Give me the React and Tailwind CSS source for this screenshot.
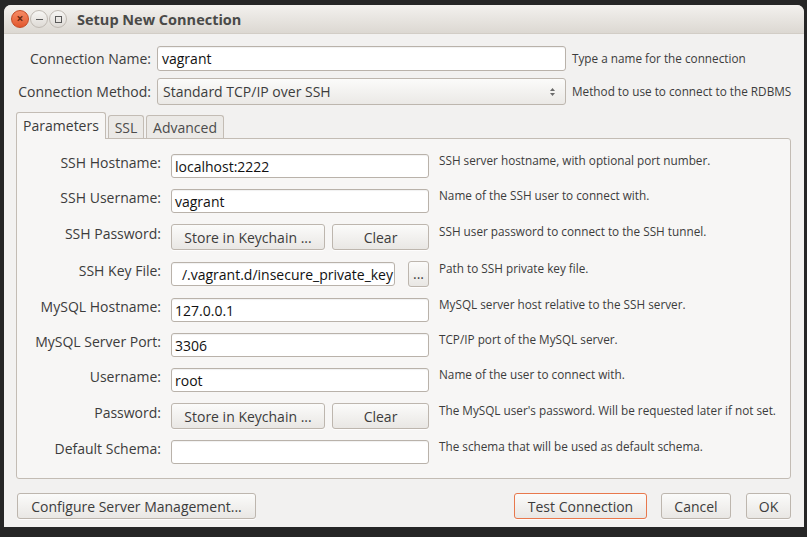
import React from "react";

const font = { fontFamily: '"Open Sans", "Noto Sans", sans-serif' };

function Input({ children, className = "" }) {
  return (
    <div className={"h-[24px] bg-white border border-[#b9b2aa] rounded-[3px] flex items-center px-[3px] text-[14px] text-[#111] whitespace-nowrap overflow-hidden shadow-[inset_0_1px_1px_rgba(0,0,0,0.06)] " + className}>
      {children}
    </div>
  );
}

function Btn({ children, className = "" }) {
  return (
    <div className={"h-[26px] flex items-center justify-center border border-[#bdb6ae] rounded-[3px] bg-gradient-to-b from-[#fbfbfa] to-[#e9e7e4] text-[14px] text-[#3c3c3c] whitespace-nowrap shadow-[0_1px_0_rgba(255,255,255,0.8)] " + className}>
      {children}
    </div>
  );
}

function Row({ label, hint, children, h = "h-[24px]" }) {
  return (
    <div className={"flex items-center " + h}>
      <div className="w-[144px] text-right text-[14px] text-[#3c3c3c] whitespace-nowrap leading-none -mt-[6px]">{label}</div>
      <div className="ml-[10px] w-[258px] flex items-center">{children}</div>
      <div className="ml-[10px] text-[11.75px] text-[#3c3c3c] whitespace-nowrap leading-none -mt-[11px]">{hint}</div>
    </div>
  );
}

export default function App() {
  return (
    <div style={font} className="w-[807px] h-[537px] bg-[#262626] pt-[5px] pl-[4px] overflow-hidden">
      <div className="w-[800px] h-[522px] rounded-t-[7px] overflow-hidden flex flex-col bg-[#f2f1f0]">
        {/* Title bar */}
        <div className="h-[29px] flex items-center bg-gradient-to-b from-[#f3f1ee] to-[#dcd8d2] border-b border-[#d2cdc6] shrink-0">
          <div className="ml-[7px] w-[18px] h-[18px] rounded-full bg-gradient-to-b from-[#f58a64] to-[#e2572d] border border-[#c44a25] flex items-center justify-center">
            <span className="text-[12px] leading-none text-[#6a2810] font-bold -mt-[1px]">×</span>
          </div>
          <div className="ml-[1px] w-[18px] h-[18px] rounded-full bg-gradient-to-b from-[#f7f6f4] to-[#dedad5] border border-[#bfb9b2] flex items-center justify-center">
            <div className="w-[7px] h-[1px] bg-[#5a5a5a]" />
          </div>
          <div className="ml-[1px] w-[18px] h-[18px] rounded-full bg-gradient-to-b from-[#f7f6f4] to-[#dedad5] border border-[#bfb9b2] flex items-center justify-center">
            <div className="w-[7px] h-[7px] border border-[#5a5a5a]" />
          </div>
          <div className="ml-[10px] mt-[1px] text-[14.5px] font-bold text-[#4a4a48]">Setup New Connection</div>
        </div>

        {/* Body */}
        <div className="flex-1 flex flex-col pl-[12px] pr-[9px] pt-[12px]">
          <div className="flex items-center h-[25px]">
            <div className="w-[135px] text-right text-[14px] text-[#3c3c3c] whitespace-nowrap -mt-[1px]">Connection Name:</div>
            <Input className="ml-[6px] w-[409px] h-[25px] !px-[4px]">vagrant</Input>
            <div className="ml-[6px] text-[11.75px] text-[#3c3c3c] whitespace-nowrap">Type a name for the connection</div>
          </div>
          <div className="flex items-center h-[27px] mt-[7px]">
            <div className="w-[135px] text-right text-[14px] text-[#3c3c3c] whitespace-nowrap -mt-[1px]">Connection Method:</div>
            <div className="ml-[6px] w-[409px] h-[27px] border border-[#bdb6ae] rounded-[3px] bg-gradient-to-b from-[#fbfbfa] to-[#ebe9e6] flex items-center pl-[5px] pr-[9px] text-[14px] text-[#3c3c3c]">
              <span className="flex-1">Standard TCP/IP over SSH</span>
              <svg width="7" height="14" viewBox="0 0 7 14">
                <path d="M3.5 3 L6 6 L1 6 Z" fill="#6a6a6a" />
                <path d="M3.5 11 L6 8 L1 8 Z" fill="#6a6a6a" />
              </svg>
            </div>
            <div className="ml-[6px] text-[11.75px] text-[#3c3c3c] whitespace-nowrap">Method to use to connect to the RDBMS</div>
          </div>

          {/* Tabs */}
          <div className="flex items-end h-[27px] mt-[6px] relative z-10">
            <div className="h-[27px] w-[90px] bg-[#f7f6f5] border border-[#c3bcb4] border-b-0 rounded-t-[3px] flex items-center justify-center text-[14px] text-[#3c3c3c] mb-[-1px] pb-[1px]">Parameters</div>
            <div className="ml-[2px] h-[23px] w-[36px] bg-[#ebe9e6] border border-[#c3bcb4] border-b-0 rounded-t-[3px] flex items-center justify-center text-[14px] text-[#4c4c4c]">SSL</div>
            <div className="ml-[2px] h-[23px] w-[78px] bg-[#ebe9e6] border border-[#c3bcb4] border-b-0 rounded-t-[3px] flex items-center justify-center text-[14px] text-[#4c4c4c]">Advanced</div>
          </div>

          {/* Panel */}
          <div className="w-[775px] h-[341px] bg-[#f7f6f5] border border-[#c3bcb4] rounded-[3px] rounded-tl-none pt-[15px] flex flex-col gap-[11px]">
            <Row label="SSH Hostname:" hint="SSH server hostname, with optional port number.">
              <Input className="w-[258px]">localhost:2222</Input>
            </Row>
            <Row label="SSH Username:" hint="Name of the SSH user to connect with.">
              <Input className="w-[258px]">vagrant</Input>
            </Row>
            <Row label="SSH Password:" hint="SSH user password to connect to the SSH tunnel." h="h-[26px]">
              <Btn className="w-[154px]">Store in Keychain ...</Btn>
              <Btn className="ml-[7px] w-[97px]">Clear</Btn>
            </Row>
            <Row label="SSH Key File:" hint="Path to SSH private key file." h="h-[26px]">
              <Input className="w-[224px] justify-end !pl-0 !pr-[1px] text-[14.4px]">/.vagrant.d/insecure_private_key</Input>
              <Btn className="ml-[13px] w-[21px] text-[12px]"><span className="-mt-[2px]">...</span></Btn>
            </Row>
            <Row label="MySQL Hostname:" hint="MySQL server host relative to the SSH server.">
              <Input className="w-[258px]">127.0.0.1</Input>
            </Row>
            <Row label="MySQL Server Port:" hint="TCP/IP port of the MySQL server.">
              <Input className="w-[258px]">3306</Input>
            </Row>
            <Row label="Username:" hint="Name of the user to connect with.">
              <Input className="w-[258px]">root</Input>
            </Row>
            <Row label="Password:" hint="The MySQL user's password. Will be requested later if not set." h="h-[26px]">
              <Btn className="w-[154px]">Store in Keychain ...</Btn>
              <Btn className="ml-[7px] w-[97px]">Clear</Btn>
            </Row>
            <Row label="Default Schema:" hint="The schema that will be used as default schema.">
              <Input className="w-[258px]"></Input>
            </Row>
          </div>

          {/* Bottom buttons */}
          <div className="flex items-center mt-[14px] h-[26px]">
            <Btn className="ml-[1px] w-[239px]">Configure Server Management...</Btn>
            <div className="flex-1" />
            <Btn className="w-[133px] !border-[#e8784c] shadow-[0_0_0_0.5px_rgba(232,120,76,0.4)]">Test Connection</Btn>
            <Btn className="ml-[14px] w-[70px]">Cancel</Btn>
            <Btn className="ml-[15px] w-[45px] mr-[4px]">OK</Btn>
          </div>
        </div>
      </div>
    </div>
  );
}
